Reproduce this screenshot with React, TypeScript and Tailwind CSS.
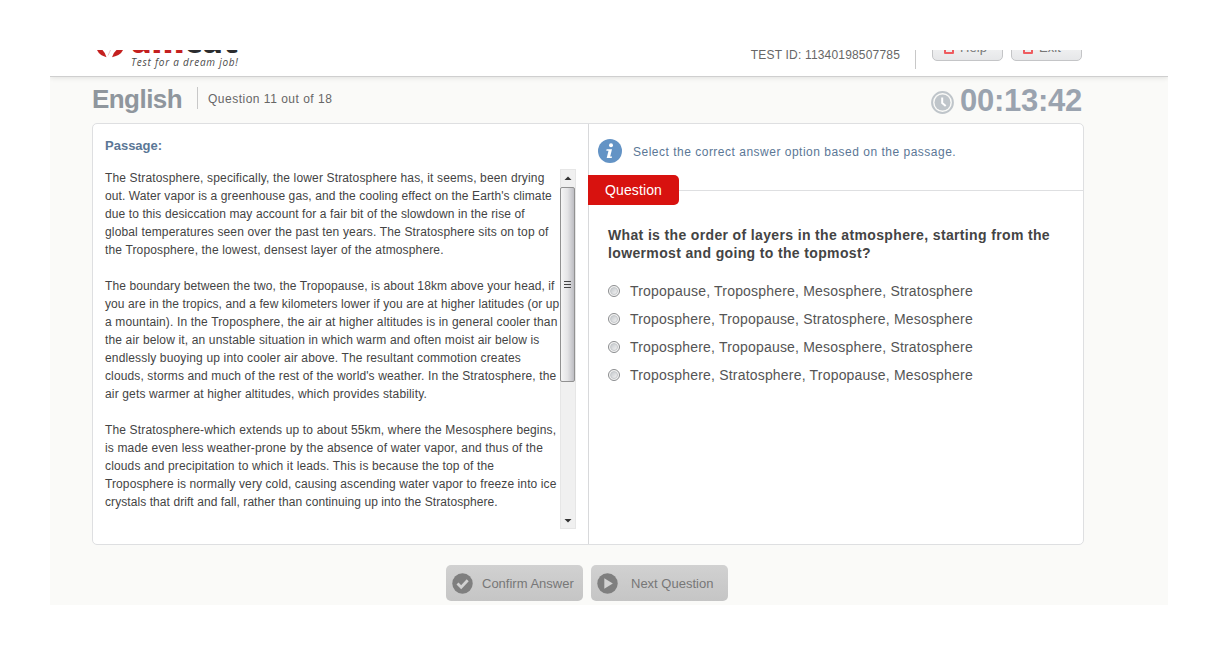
import React from "react";

const normal = "tracking-[0.15px]";
const snug = "tracking-[0.1px]";
const tight = "tracking-[0.075px]";

const passage: [string, string][][] = [
  [
    ["The Stratosphere, specifically, the lower Stratosphere has, it seems, been drying", normal],
    ["out. Water vapor is a greenhouse gas, and the cooling effect on the Earth's climate", snug],
    ["due to this desiccation may account for a fair bit of the slowdown in the rise of", snug],
    ["global temperatures seen over the past ten years. The Stratosphere sits on top of", normal],
    ["the Troposphere, the lowest, densest layer of the atmosphere.", normal],
  ],
  [
    ["The boundary between the two, the Tropopause, is about 18km above your head, if", snug],
    ["you are in the tropics, and a few kilometers lower if you are at higher latitudes (or up", snug],
    ["a mountain). In the Troposphere, the air at higher altitudes is in general cooler than", normal],
    ["the air below it, an unstable situation in which warm and often moist air below is", normal],
    ["endlessly buoying up into cooler air above. The resultant commotion creates", normal],
    ["clouds, storms and much of the rest of the world's weather. In the Stratosphere, the", "tracking-[0.12px]"],
    ["air gets warmer at higher altitudes, which provides stability.", normal],
  ],
  [
    ["The Stratosphere-which extends up to about 55km, where the Mesosphere begins,", normal],
    ["is made even less weather-prone by the absence of water vapor, and thus of the", normal],
    ["clouds and precipitation to which it leads. This is because the top of the", normal],
    ["Troposphere is normally very cold, causing ascending water vapor to freeze into ice", snug],
    ["crystals that drift and fall, rather than continuing up into the Stratosphere.", tight],
  ],
];

const options = [
  "Tropopause, Troposphere, Mesosphere, Stratosphere",
  "Troposphere, Tropopause, Stratosphere, Mesosphere",
  "Troposphere, Tropopause, Mesosphere, Stratosphere",
  "Troposphere, Stratosphere, Tropopause, Mesosphere",
];

function HeaderButton({ label }: { label: string }) {
  return (
    <button className="flex h-[27px] w-[71px] items-center rounded-[5px] border border-[#c4c5c7] bg-linear-to-b from-[#fafafa] to-[#e6e7e9] pl-[11px] text-[13px] tracking-[0.1px] text-[#777]">
      <span className="mr-[6px] mt-[2px] block h-[11px] w-[10px] rounded-[1px] border-2 border-[#ee5c60]" />
      {label}
    </button>
  );
}

function Logo() {
  return (
    <div className="relative h-[27px] w-[150px]">
      <svg className="absolute top-0 left-[3px]" width="29" height="9" viewBox="0 0 29 9">
        <path d="M1 0H6.5Q9.5 3 10.5 7.2Q3.5 5.5 1 0Z" fill="#c4201f" />
        <path d="M27 0H20.5Q17 3 16 7.2Q24.5 5.5 27 0Z" fill="#c4201f" />
        <path d="M12 5.5L14.5 0" stroke="#e7b4b2" strokeWidth="0.8" />
      </svg>
      <div className="absolute top-[-31px] left-[38px] text-[33px] leading-[44px] font-extrabold font-['Open_Sans',sans-serif]">
        <span className="text-[#c4201f]">am</span>
        <span className="text-[#2b2c2e]">cat</span>
      </div>
      <div className="absolute top-[5px] left-[38px] text-[10px] leading-[14px] font-medium whitespace-nowrap italic tracking-[0.75px] text-[#4b4b4b] font-['Open_Sans',sans-serif]">
        Test for a dream job!
      </div>
    </div>
  );
}

export default function App() {
  return (
    <div className="h-[656px] w-[1218px] bg-white px-[50px] pt-[50px] font-['Liberation_Sans',Arial,sans-serif]">
      <div className="flex h-[555px] w-[1118px] flex-col overflow-hidden bg-[#fafaf8]">
        <header className="flex h-[27px] shrink-0 items-start justify-between border-b border-[#cfcfcf] bg-white pr-[86px] pl-[43px] shadow-[0_1px_5px_rgba(0,0,0,0.1)]">
          <Logo />
          <div className="mt-[-14px] flex h-[40px] shrink-0 items-start">
            <span className="mt-[11px] text-[12px] leading-[16px] tracking-[0.18px] text-[#666]">TEST ID: 11340198507785</span>
            <span className="mr-4 ml-[15px] h-[33px] w-px bg-[#c8c8c8]" />
            <div className="mt-[-2px] flex gap-2">
              <HeaderButton label="Help" />
              <HeaderButton label="Exit" />
            </div>
          </div>
        </header>

        <div className="flex h-[46px] shrink-0 items-start justify-between pr-[86px] pl-[42px]">
          <div className="flex items-start">
            <h1 className="mt-[6px] w-[90px] text-[26px] leading-[32px] font-bold tracking-[-0.55px] text-[#8f969d]">English</h1>
            <span className="mt-[10px] ml-[15px] h-[22px] w-px bg-[#c8c8c8]" />
            <span className="mt-[13px] ml-[10px] text-[12px] leading-[18px] tracking-[0.5px] text-[#666]">Question 11 out of 18</span>
          </div>
          <div className="flex items-start">
            <svg className="mt-[14px] mr-[6px]" width="23" height="23" viewBox="0 0 23 23">
              <circle cx="11.5" cy="11.5" r="10.4" fill="none" stroke="#bfc5ca" strokeWidth="2" />
              <circle cx="11.5" cy="11.5" r="8" fill="#bfc5ca" />
              <path d="M11.2 6.5v5.5l3.5 3" fill="none" stroke="#fff" strokeWidth="2" />
            </svg>
            <span className="mt-[7px] text-[31px] leading-[34px] font-bold tracking-[-0.25px] text-[#9aa3af]">00:13:42</span>
          </div>
        </div>

        <main className="mx-[42px] flex h-[422px] w-[992px] shrink-0 rounded-[5px] border border-[#dedfe1] bg-white">
          <section className="flex w-[495px] flex-col pt-[13px] pl-[12px]">
            <h2 className="text-[13px] leading-[18px] font-bold text-[#5b7796]">Passage:</h2>
            <div className="mt-[14px] flex h-[360px]">
              <div className="w-[455px] text-[12px] leading-[18px] text-[#444]">
                {passage.map((lines, i) => (
                  <div key={i} className="mb-[18px]">
                    {lines.map(([line, tracking]) => (
                      <div key={line} className={`whitespace-nowrap ${tracking}`}>{line}</div>
                    ))}
                  </div>
                ))}
              </div>
              <div className="flex w-[16px] shrink-0 flex-col items-center border border-[#e6e6e6] bg-[#f0f0f0]">
                <svg className="h-[17px] shrink-0" width="14" height="17" viewBox="0 0 14 17">
                  <path d="M3.5 10h7L7 6.5z" fill="#333" />
                </svg>
                <div className="ml-[-1px] flex h-[195px] w-[15px] shrink-0 flex-col items-center justify-center gap-[2px] rounded-[2px] border border-[#919191] bg-linear-to-r from-[#f5f5f5] via-[#e4e4e6] to-[#bdbdc2]">
                  <i className="h-px w-[7px] bg-[#444]" />
                  <i className="h-px w-[7px] bg-[#444]" />
                  <i className="h-px w-[7px] bg-[#444]" />
                </div>
                <svg className="mt-auto h-[17px] shrink-0" width="14" height="17" viewBox="0 0 14 17">
                  <path d="M3.5 8h7L7 11.5z" fill="#333" />
                </svg>
              </div>
            </div>
          </section>

          <section className="flex flex-1 flex-col border-l border-[#d8d9db]">
            <div className="flex h-[51px] items-start pt-[15px] pl-[9px]">
              <svg width="24" height="24" viewBox="0 0 24 24">
                <circle cx="12" cy="12" r="12" fill="#6393c5" />
                <circle cx="13" cy="6.3" r="2" fill="#fff" />
                <path d="M8.6 10.2h5.4l-1.8 7.2h1.8l-.3 1.6H8.7l1.8-7.2H8.3z" fill="#fff" />
              </svg>
              <p className="mt-[4px] ml-[11px] text-[12px] leading-[18px] tracking-[0.5px] text-[#5b7796]">Select the correct answer option based on the passage.</p>
            </div>
            <div className="ml-[-1px] flex items-center">
              <div className="flex h-[30px] w-[91px] items-center justify-center rounded-r-[5px] bg-[#d8120f] text-[14px] tracking-[0.1px] text-white">Question</div>
              <div className="h-px flex-1 bg-[#dedfe1]" />
            </div>
            <div className="mt-[21px] pl-[19px] text-[14px] leading-[18px] font-bold tracking-[0.355px] text-[#444]">
              <div>What is the order of layers in the atmosphere, starting from the</div>
              <div>lowermost and going to the topmost?</div>
            </div>
            <div className="mt-[15px] pl-[19px]">
              {options.map((option) => (
                <label key={option} className="flex h-[28px] items-center text-[14px] tracking-[0.195px] text-[#555]">
                  <span className="mr-[10px] flex size-[12px] items-center justify-center rounded-full border border-[#8b8d8f] bg-[#f4f4f4]">
                    <i className="size-[8px] rounded-full border border-[#c5c8cb] bg-linear-to-br from-[#c4c8cc] to-[#f3f3f3]" />
                  </span>
                  {option}
                </label>
              ))}
            </div>
          </section>
        </main>

        <footer className="mt-[20px] flex gap-2 pl-[396px] text-[13px] text-[#777]">
          <button className="flex h-[36px] w-[137px] items-center rounded-[5px] bg-linear-to-b from-[#d1d1d1] to-[#c5c5c5] pl-[6px]">
            <svg width="21" height="21" viewBox="0 0 21 21">
              <circle cx="10.5" cy="10.5" r="10.2" fill="#7f7f7f" />
              <path d="M5.5 10.5l3.7 3.8 6.5-7" fill="none" stroke="#d2d2d2" strokeWidth="2.8" />
            </svg>
            <span className="mt-[2px] ml-[9px]">Confirm Answer</span>
          </button>
          <button className="flex h-[36px] w-[137px] items-center rounded-[5px] bg-linear-to-b from-[#d1d1d1] to-[#c5c5c5] pl-[6px]">
            <svg width="21" height="21" viewBox="0 0 21 21">
              <circle cx="10.5" cy="10.5" r="10.2" fill="#7f7f7f" />
              <path d="M7.3 5.2v10.6l8.5-5.3z" fill="#d2d2d2" />
            </svg>
            <span className="mt-[2px] ml-[13px]">Next Question</span>
          </button>
        </footer>
      </div>
    </div>
  );
}
